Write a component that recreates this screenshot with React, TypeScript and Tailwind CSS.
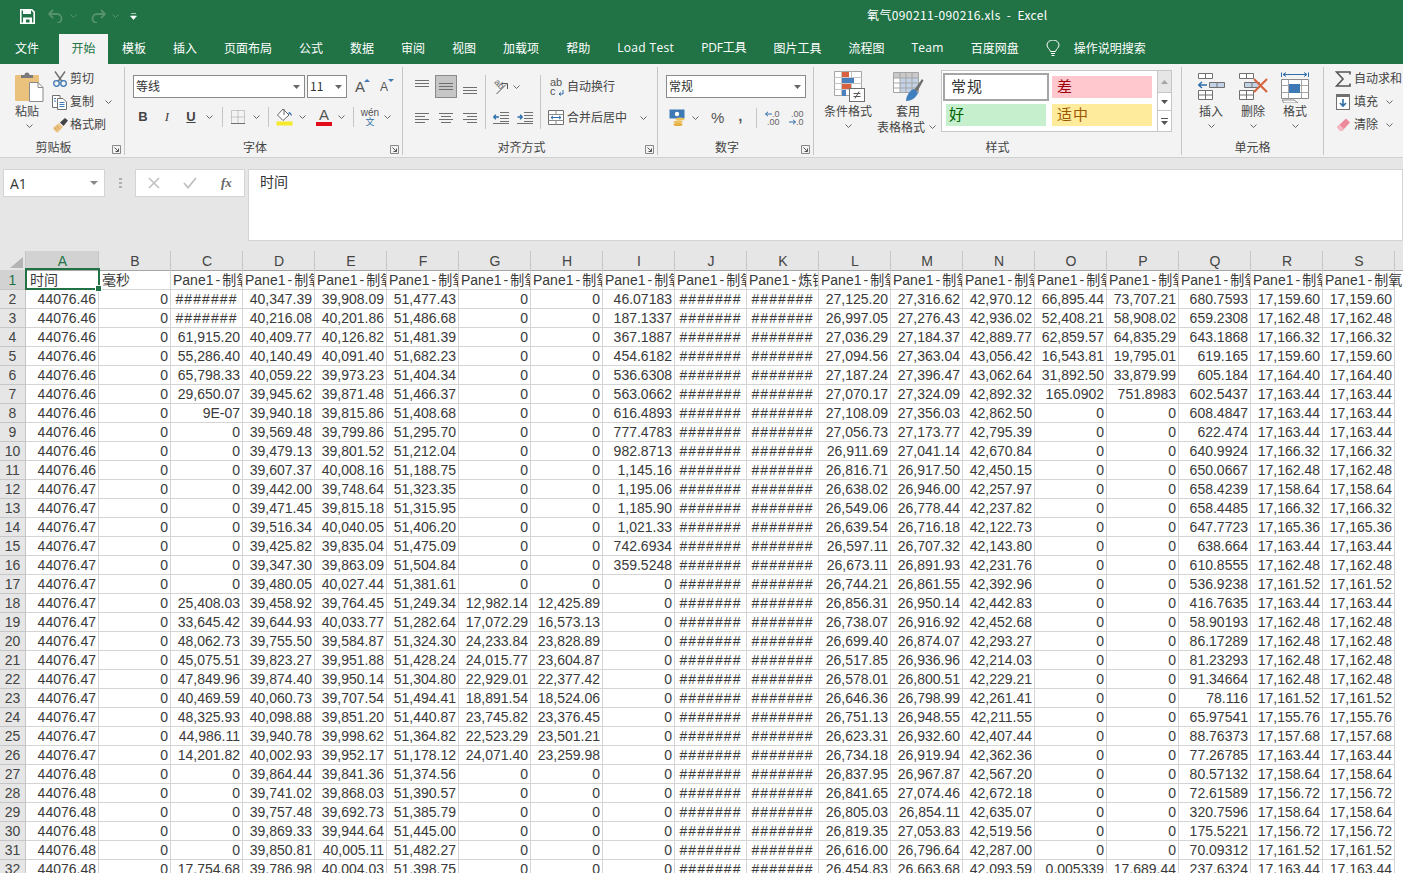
import React from "react";
import clsx from "clsx";

const H = "#";
const raw = `44076.46|0|#|40,347.39|39,908.09|51,477.43|0|0|46.07183|#|#|27,125.20|27,316.62|42,970.12|66,895.44|73,707.21|680.7593|17,159.60|17,159.60
44076.46|0|#|40,216.08|40,201.86|51,486.68|0|0|187.1337|#|#|26,997.05|27,276.43|42,936.02|52,408.21|58,908.02|659.2308|17,162.48|17,162.48
44076.46|0|61,915.20|40,409.77|40,126.82|51,481.39|0|0|367.1887|#|#|27,036.29|27,184.37|42,889.77|62,859.57|64,835.29|643.1868|17,166.32|17,166.32
44076.46|0|55,286.40|40,140.49|40,091.40|51,682.23|0|0|454.6182|#|#|27,094.56|27,363.04|43,056.42|16,543.81|19,795.01|619.165|17,159.60|17,159.60
44076.46|0|65,798.33|40,059.22|39,973.23|51,404.34|0|0|536.6308|#|#|27,187.24|27,396.47|43,062.64|31,892.50|33,879.99|605.184|17,164.40|17,164.40
44076.46|0|29,650.07|39,945.62|39,871.48|51,466.37|0|0|563.0662|#|#|27,070.17|27,324.09|42,892.32|165.0902|751.8983|602.5437|17,163.44|17,163.44
44076.46|0|9E-07|39,940.18|39,815.86|51,408.68|0|0|616.4893|#|#|27,108.09|27,356.03|42,862.50|0|0|608.4847|17,163.44|17,163.44
44076.46|0|0|39,569.48|39,799.86|51,295.70|0|0|777.4783|#|#|27,056.73|27,173.77|42,795.39|0|0|622.474|17,163.44|17,163.44
44076.46|0|0|39,479.13|39,801.52|51,212.04|0|0|982.8713|#|#|26,911.69|27,041.14|42,670.84|0|0|640.9924|17,166.32|17,166.32
44076.46|0|0|39,607.37|40,008.16|51,188.75|0|0|1,145.16|#|#|26,816.71|26,917.50|42,450.15|0|0|650.0667|17,162.48|17,162.48
44076.47|0|0|39,442.00|39,748.64|51,323.35|0|0|1,195.06|#|#|26,638.02|26,946.00|42,257.97|0|0|658.4239|17,158.64|17,158.64
44076.47|0|0|39,471.45|39,815.18|51,315.95|0|0|1,185.90|#|#|26,549.06|26,778.44|42,237.82|0|0|658.4485|17,166.32|17,166.32
44076.47|0|0|39,516.34|40,040.05|51,406.20|0|0|1,021.33|#|#|26,639.54|26,716.18|42,122.73|0|0|647.7723|17,165.36|17,165.36
44076.47|0|0|39,425.82|39,835.04|51,475.09|0|0|742.6934|#|#|26,597.11|26,707.32|42,143.80|0|0|638.664|17,163.44|17,163.44
44076.47|0|0|39,347.30|39,863.09|51,504.84|0|0|359.5248|#|#|26,673.11|26,891.93|42,231.76|0|0|610.8555|17,162.48|17,162.48
44076.47|0|0|39,480.05|40,027.44|51,381.61|0|0|0|#|#|26,744.21|26,861.55|42,392.96|0|0|536.9238|17,161.52|17,161.52
44076.47|0|25,408.03|39,458.92|39,764.45|51,249.34|12,982.14|12,425.89|0|#|#|26,856.31|26,950.14|42,442.83|0|0|416.7635|17,163.44|17,163.44
44076.47|0|33,645.42|39,644.93|40,033.77|51,282.64|17,072.29|16,573.13|0|#|#|26,738.07|26,916.92|42,452.68|0|0|58.90193|17,162.48|17,162.48
44076.47|0|48,062.73|39,755.50|39,584.87|51,324.30|24,233.84|23,828.89|0|#|#|26,699.40|26,874.07|42,293.27|0|0|86.17289|17,162.48|17,162.48
44076.47|0|45,075.51|39,823.27|39,951.88|51,428.24|24,015.77|23,604.87|0|#|#|26,517.85|26,936.96|42,214.03|0|0|81.23293|17,162.48|17,162.48
44076.47|0|47,849.96|39,874.40|39,950.14|51,304.80|22,929.01|22,377.42|0|#|#|26,578.01|26,800.51|42,229.21|0|0|91.34664|17,162.48|17,162.48
44076.47|0|40,469.59|40,060.73|39,707.54|51,494.41|18,891.54|18,524.06|0|#|#|26,646.36|26,798.99|42,261.41|0|0|78.116|17,161.52|17,161.52
44076.47|0|48,325.93|40,098.88|39,851.20|51,440.87|23,745.82|23,376.45|0|#|#|26,751.13|26,948.55|42,211.55|0|0|65.97541|17,155.76|17,155.76
44076.47|0|44,986.11|39,940.78|39,998.62|51,364.82|22,523.29|23,501.21|0|#|#|26,623.31|26,932.60|42,407.44|0|0|88.76373|17,157.68|17,157.68
44076.47|0|14,201.82|40,002.93|39,952.17|51,178.12|24,071.40|23,259.98|0|#|#|26,734.18|26,919.94|42,362.36|0|0|77.26785|17,163.44|17,163.44
44076.48|0|0|39,864.44|39,841.36|51,374.56|0|0|0|#|#|26,837.95|26,967.87|42,567.20|0|0|80.57132|17,158.64|17,158.64
44076.48|0|0|39,741.02|39,868.03|51,390.57|0|0|0|#|#|26,841.65|27,074.46|42,672.18|0|0|72.61589|17,156.72|17,156.72
44076.48|0|0|39,757.48|39,692.73|51,385.79|0|0|0|#|#|26,805.03|26,854.11|42,635.07|0|0|320.7596|17,158.64|17,158.64
44076.48|0|0|39,869.33|39,944.64|51,445.00|0|0|0|#|#|26,819.35|27,053.83|42,519.56|0|0|175.5221|17,156.72|17,156.72
44076.48|0|0|39,850.81|40,005.11|51,482.27|0|0|0|#|#|26,616.00|26,796.64|42,287.00|0|0|70.09312|17,161.52|17,161.52
44076.48|0|17,754.68|39,786.98|40,004.03|51,398.75|0|0|0|#|#|26,454.83|26,663.68|42,093.59|0.005339|17,689.44|237.6324|17,163.44|17,163.44`;

const rows = raw.split("\n").map((l) => l.split("|"));
const columns = "ABCDEFGHIJKLMNOPQRS".split("");
const tabs = ["模板", "插入", "页面布局", "公式", "数据", "审阅", "视图", "加载项", "帮助", "Load Test", "PDF工具", "图片工具", "流程图", "Team", "百度网盘"];
const gridCols = "grid grid-cols-[26px_73px_repeat(18,72px)_8px]";

function Chev({ color = "#666", className }: { color?: string; className?: string }) {
  return (
    <svg width="7" height="4" viewBox="0 0 7 4" className={clsx("shrink-0", className)}>
      <path d="M0.5 0.5 3.5 3.5 6.5 0.5" stroke={color} fill="none" />
    </svg>
  );
}

function Sep({ className }: { className?: string }) {
  return <div className={clsx("w-px bg-[#c6c6c6] shrink-0", className)} />;
}

function Group({ label, launcher, className, children }: { label?: string; launcher?: boolean; className: string; children: React.ReactNode }) {
  return (
    <div className={clsx("relative flex flex-col mt-[3px] h-[88px] shrink-0 border-r border-[#c6c6c6]", className)}>
      <div className="flex h-[70px]">{children}</div>
      <div className={clsx("h-[18px] leading-[20px] text-center text-[12px] text-[#444]", launcher && "pr-[17px]")}>{label}</div>
      {launcher && (
        <svg width="9" height="9" viewBox="0 0 9 9" className="absolute right-[3px] bottom-[1px]">
          <path d="M0.5 8.5V0.5H8.5V8.5Z" stroke="#888" fill="none" />
          <path d="M2.5 2.5 6.5 6.5M6.5 3.5V6.5H3.5" stroke="#555" fill="none" />
        </svg>
      )}
    </div>
  );
}

function Combo({ text, className }: { text: string; className: string }) {
  return (
    <div className={clsx("flex items-center h-[23px] bg-white border border-[#8a8a8a] shrink-0", className)}>
      <span className="flex-1 pl-[2px] pb-[2px] text-[12px] text-[#333] leading-none">{text}</span>
      <svg width="7" height="4" viewBox="0 0 7 4" className="mr-[4px]">
        <path d="M0 0H7L3.5 4Z" fill="#666" />
      </svg>
    </div>
  );
}

function Lines({ kind }: { kind: "left" | "center" | "right" }) {
  const short = kind === "left" ? "M1 5.5H11M1 11.5H11" : kind === "right" ? "M5 5.5H15M5 11.5H15" : "M3 5.5H13M3 11.5H13";
  return (
    <svg width="16" height="14" viewBox="0 0 16 14">
      <path d={`M1 2.5H15M1 8.5H15 ${short}`} stroke="#6f6f6f" fill="none" />
    </svg>
  );
}

function VLines({ n }: { n: number }) {
  return (
    <svg width="16" height="16" viewBox="0 0 16 16">
      <path d={n === 0 ? "M1 1.5H15M1 4.5H15M1 7.5H15" : n === 1 ? "M1 4.5H15M1 7.5H15M1 10.5H15" : "M1 8.5H15M1 11.5H15M1 14.5H15"} stroke="#6f6f6f" fill="none" />
    </svg>
  );
}

function PasteIcon() {
  return (
    <svg width="29" height="30" viewBox="0 0 29 30">
      <rect x="0" y="3" width="24" height="26" rx="1" fill="#ebc27d" />
      <path d="M6 5V3H9.5A2.5 2.5 0 0 1 14.5 3H18V6H6Z" fill="#7a7a7a" />
      <path d="M14.5 10.5H23L28 15.5V29.5H14.5Z" fill="#fff" stroke="#8a8a8a" />
      <path d="M23 10.5V15.5H28" fill="none" stroke="#8a8a8a" />
    </svg>
  );
}

function ScissorsIcon() {
  return (
    <svg width="16" height="16" viewBox="0 0 16 16">
      <path d="M3 0.5 10 10.5M13 0.5 6 10.5" stroke="#6f6f6f" strokeWidth="1.4" fill="none" />
      <circle cx="4.5" cy="12.5" r="2.8" stroke="#3f79b5" strokeWidth="1.3" fill="none" />
      <circle cx="11.5" cy="12.5" r="2.8" stroke="#3f79b5" strokeWidth="1.3" fill="none" />
    </svg>
  );
}

function CopyIcon() {
  return (
    <svg width="16" height="16" viewBox="0 0 16 16">
      <path d="M0.5 1.5H8V13.5H0.5Z" fill="#fff" stroke="#707070" />
      <path d="M5.5 4.5H11L14.5 8V15.5H5.5Z" fill="#fff" stroke="#707070" />
      <path d="M2 4.5H4M2 7H4M7.5 8.5H12.5M7.5 10.5H12.5M7.5 12.5H12.5" stroke="#3f79b5" />
    </svg>
  );
}

function BrushIcon() {
  return (
    <svg width="17" height="16" viewBox="0 0 17 16">
      <path d="M1 11 7 6 11 10 6 15.5C4 15.5 2 13.5 1 11Z" fill="#edc587" />
      <path d="M2.5 10.5 5 13M4.5 8.8 7.5 12" stroke="#c89a4e" fill="none" />
      <path d="M8 5.5 13 1 16 3.5 11.5 9Z" fill="#444" />
    </svg>
  );
}

function FillIcon() {
  return (
    <svg width="17" height="18" viewBox="0 0 17 18">
      <path d="M7 1 1.5 7 7 12.5 13 7Z" fill="#fff" stroke="#666" />
      <path d="M13.5 4C15.5 5 16 7 16 8L12 5Z" fill="#3f79b5" />
      <path d="M8 1V7" stroke="#666" />
      <rect x="0.5" y="13.5" width="16" height="4" fill="#f5ea2a" />
    </svg>
  );
}

function WrapIcon() {
  return (
    <div className="relative flex flex-col w-[14px] font-['Liberation_Sans'] text-[11px] leading-[9px] text-[#555]">
      <span>ab</span>
      <span>c</span>
      <svg width="6" height="7" viewBox="0 0 6 7" className="absolute right-0 bottom-0">
        <path d="M1 5H5V1M1 5 3 3.5M1 5 3 6.5" stroke="#2f6ea8" fill="none" />
      </svg>
    </div>
  );
}

function MergeIcon() {
  return (
    <svg width="16" height="15" viewBox="0 0 16 15">
      <path d="M0.5 0.5H15.5V14.5H0.5Z" fill="#fff" stroke="#707070" />
      <path d="M0.5 4.5H15.5M0.5 10.5H15.5M8 0.5V4.5M8 10.5V14.5" stroke="#8a8a8a" />
      <path d="M3 7.5H13M3 7.5 5 5.8M3 7.5 5 9.2M13 7.5 11 5.8M13 7.5 11 9.2" stroke="#2f6ea8" fill="none" />
    </svg>
  );
}

function OrientIcon() {
  return (
    <div className="relative w-[16px] h-[16px]">
      <span className="absolute left-[0px] top-[1px] font-['Liberation_Sans'] text-[9px] leading-[9px] text-[#666] rotate-45">ab</span>
      <svg width="16" height="16" viewBox="0 0 16 16">
        <path d="M2.5 15 12 5.5M8 4.5H13.5V10" stroke="#555" fill="none" />
      </svg>
    </div>
  );
}

function IndentIcon({ dir }: { dir: "out" | "in" }) {
  return (
    <svg width="16" height="12" viewBox="0 0 16 12">
      <path d="M7 0.5H16M7 3.5H16M7 6.5H16M7 9.5H16M0 11.5H16" stroke="#707070" fill="none" />
      {dir === "out" ? <path d="M0.5 5H6M0.5 5 3 2.8M0.5 5 3 7.2" stroke="#2f6ea8" strokeWidth="1.4" fill="none" /> : <path d="M0.5 5H5.5M5.5 5 3 2.8M5.5 5 3 7.2" stroke="#2f6ea8" strokeWidth="1.4" fill="none" />}
    </svg>
  );
}

function CurrencyIcon() {
  return (
    <svg width="17" height="17" viewBox="0 0 17 17">
      <rect x="0.5" y="0.5" width="15" height="9" fill="#3f79b5" />
      <circle cx="8" cy="5" r="2.2" fill="#fff" />
      <ellipse cx="11" cy="10" rx="4.5" ry="1.6" fill="#edc05f" />
      <ellipse cx="9" cy="13" rx="4.5" ry="1.6" fill="#edc05f" />
      <ellipse cx="9" cy="15.5" rx="4.5" ry="1.5" fill="#e3ae3d" />
    </svg>
  );
}

function DecIcon({ dir }: { dir: "more" | "less" }) {
  return (
    <div className="relative flex flex-col items-end w-[15px] font-['Liberation_Sans'] text-[9px] leading-[8px] text-[#666]">
      <span>{dir === "more" ? ".0" : ".00"}</span>
      <span>{dir === "more" ? ".00" : ".0"}</span>
      <svg width="7" height="6" viewBox="0 0 7 6" className={clsx("absolute left-0", dir === "more" ? "top-[1px]" : "bottom-[1px]")}>
        <path d={dir === "more" ? "M0.5 3H7M0.5 3 3 0.8M0.5 3 3 5.2" : "M0 3H6.5M6.5 3 4 0.8M6.5 3 4 5.2"} stroke="#2f6ea8" fill="none" />
      </svg>
    </div>
  );
}

function CondIcon() {
  return (
    <svg width="31" height="31" viewBox="0 0 31 31">
      <path d="M0.5 0.5H27.5V24.5H0.5Z" fill="#fff" stroke="#a5a5a5" />
      <path d="M7.5 0.5V24.5M17.5 0.5V24.5M0.5 6.5H27.5M0.5 12.5H27.5M0.5 18.5H27.5" stroke="#c6c6c6" />
      <rect x="8" y="1" width="7" height="5" fill="#d9613f" />
      <rect x="8" y="7" width="12" height="5" fill="#4a7fbd" />
      <rect x="8" y="13" width="9" height="5" fill="#d9613f" />
      <rect x="8" y="19" width="4" height="6" fill="#4a7fbd" />
      <rect x="15.5" y="17.5" width="15" height="13" fill="#fff" stroke="#707070" />
      <path d="M19.5 22.5H26.5M19.5 25.5H26.5M25 20.5 21 27.5" stroke="#555" fill="none" />
    </svg>
  );
}

function TableIcon() {
  return (
    <svg width="31" height="30" viewBox="0 0 31 30">
      <path d="M0.5 0.5H25.5V20.5H0.5Z" fill="#fff" stroke="#a5a5a5" />
      <rect x="1" y="1" width="24" height="5" fill="#c9c9c9" />
      <rect x="7" y="6" width="18" height="14" fill="#c3d2e6" />
      <path d="M7 0.5V20.5M13 0.5V20.5M19 0.5V20.5M0.5 6H25.5M0.5 11H25.5M0.5 16H25.5" stroke="#a5a5a5" />
      <path d="M21 18 29 7 30.5 8.5 24 20Z" fill="#707070" />
      <path d="M13 29C13 24 17 18 21 17L25 21C23 26 18 29 13 29Z" fill="#3f7fbe" />
    </svg>
  );
}

function InsertCellIcon() {
  return (
    <svg width="28" height="28" viewBox="0 0 28 28">
      <path d="M1.5 1.5H15.5V6.5H1.5ZM8.5 1.5V6.5" fill="#fff" stroke="#707070" />
      <path d="M12.5 10.5H27.5V15.5H12.5ZM20 10.5V15.5" fill="#c3d2e6" stroke="#707070" />
      <path d="M1.5 13H10M1.5 13 5 10M1.5 13 5 16" stroke="#2f6ea8" strokeWidth="1.5" fill="none" />
      <path d="M1.5 18.5H15.5V27.5H1.5ZM8.5 18.5V27.5M1.5 23H15.5" fill="#fff" stroke="#707070" />
    </svg>
  );
}

function DeleteCellIcon() {
  return (
    <svg width="31" height="28" viewBox="0 0 31 28">
      <path d="M1.5 1.5H15.5V6.5H1.5ZM8.5 1.5V6.5" fill="#fff" stroke="#707070" />
      <path d="M6.5 10.5H21.5V15.5H6.5ZM14 10.5V15.5" fill="#c3d2e6" stroke="#707070" />
      <path d="M1.5 18.5H15.5V27.5H1.5ZM8.5 18.5V27.5M1.5 23H15.5" fill="#fff" stroke="#707070" />
      <path d="M16 7 29 20M29 7 16 20" stroke="#d5663f" strokeWidth="2.2" fill="none" />
    </svg>
  );
}

function FormatCellIcon() {
  return (
    <svg width="28" height="31" viewBox="0 0 28 31">
      <path d="M0.5 0.5V5M27.5 0.5V5M2 2.5H26M2 2.5 5 0.5M2 2.5 5 4.5M26 2.5 23 0.5M26 2.5 23 4.5" stroke="#2f6ea8" fill="none" />
      <path d="M0.5 7.5H27.5V26.5H0.5Z" fill="#fff" stroke="#8a8a8a" />
      <path d="M7.5 7.5V26.5M20.5 7.5V26.5M0.5 13.5H27.5M0.5 20.5H27.5" stroke="#a5a5a5" />
      <rect x="8" y="12" width="11" height="9" fill="#3f79b5" />
      <path d="M1 28H13L17 31H3Z" fill="#fff" stroke="#8a8a8a" />
    </svg>
  );
}

function ClearIcon() {
  return (
    <svg width="15" height="15" viewBox="0 0 15 15">
      <path d="M1 10 10 1.5 14 5.5 6 14H4Z" fill="#ec8a9b" />
      <path d="M1 10 3.5 7.5 7.5 11.5 6 14H4Z" fill="#f4b9c4" />
    </svg>
  );
}

function FillDownIcon() {
  return (
    <svg width="14" height="16" viewBox="0 0 14 16">
      <rect x="0.5" y="0.5" width="13" height="15" fill="#fff" stroke="#707070" />
      <rect x="0" y="0" width="14" height="3" fill="#707070" />
      <path d="M7 5V12M4 9 7 12 10 9" stroke="#2f6ea8" strokeWidth="1.6" fill="none" />
    </svg>
  );
}

function TitleBar() {
  return (
    <div className="flex items-center h-[32px] bg-[#217346] text-white">
      <svg width="15" height="15" viewBox="0 0 15 15" className="ml-[20px]">
        <path d="M0.8 0.8H11.8L14.2 3.2V14.2H0.8Z" fill="none" stroke="#fff" strokeWidth="1.6" />
        <rect x="3" y="1" width="8" height="4" fill="#fff" />
        <path d="M3 14V8.5H12V14H9.5V10.5H6V14Z" fill="#fff" />
      </svg>
      <svg width="15" height="14" viewBox="0 0 15 14" className="ml-[13px]">
        <path d="M5 1 1 5 5 9M1 5H9A4.5 4.5 0 0 1 9 14" fill="none" stroke="#57926f" strokeWidth="1.8" />
      </svg>
      <Chev color="#57926f" className="ml-[7px]" />
      <svg width="15" height="14" viewBox="0 0 15 14" className="ml-[14px]">
        <path d="M10 1 14 5 10 9M14 5H6A4.5 4.5 0 0 0 6 14" fill="none" stroke="#57926f" strokeWidth="1.8" />
      </svg>
      <Chev color="#57926f" className="ml-[6px]" />
      <svg width="7" height="7" viewBox="0 0 7 7" className="ml-[11px]">
        <path d="M1 0.5H6M0.5 3H6.5L3.5 6.5Z" stroke="#fff" fill="#fff" strokeWidth="0.6" />
      </svg>
      <div className="ml-[730px] whitespace-pre text-[12px] tracking-[0.38px] mb-[3px]">氧气090211-090216.xls  -  Excel</div>
    </div>
  );
}

function TabBar() {
  return (
    <div className="flex items-end h-[32px] bg-[#217346] text-white text-[12px]">
      <div className="flex items-center h-[30px] w-[59px] pl-[15px] pb-[2px]">文件</div>
      <div className="flex items-center justify-center h-[30px] w-[49px] pb-[2px] bg-[#f3f3f3] text-[#217346]">开始</div>
      <div className="flex items-center h-[30px] pb-[2px] gap-x-[27px] ml-[14px]">
        {tabs.map((t) => (
          <span key={t} className={clsx(t === "Load Test" && "tracking-[0.35px] font-['Open_Sans',sans-serif]", t === "Team" && "tracking-[0.3px] font-['Open_Sans',sans-serif]", t === "PDF工具" && "tracking-[-0.2px] font-['Open_Sans','Noto_Sans_CJK_SC',sans-serif]")}>
            {t}
          </span>
        ))}
      </div>
      <div className="flex items-center h-[30px] pb-[2px] ml-[27px]">
        <svg width="14" height="17" viewBox="0 0 14 17">
          <path d="M4.5 11.5C4 9 1 8 1 5A6 5 0 0 1 13 5C13 8 10 9 9.5 11.5Z M5 13.5H9M5.5 15.5H8.5" fill="none" stroke="#fff" />
        </svg>
        <span className="ml-[14px]">操作说明搜索</span>
      </div>
    </div>
  );
}

function Ribbon() {
  return (
    <div className="flex h-[94px] bg-[#f3f3f3] border-b border-[#d0d0d0] text-[12px] text-[#444]">
      <Group label="剪贴板" launcher className="w-[125px]">
        <div className="flex flex-col items-center w-[29px] ml-[15px]">
          <div className="mt-[5px]"><PasteIcon /></div>
          <div className="self-start mt-[1px] leading-[16px]">粘贴</div>
          <Chev className="mt-[5px]" />
        </div>
        <div className="flex flex-col ml-[8px]">
          <div className="flex items-center h-[23px] gap-x-[2px]"><ScissorsIcon /><span className="pb-[2px]">剪切</span></div>
          <div className="flex items-center h-[23px] gap-x-[2px]"><CopyIcon /><span className="pb-[2px]">复制</span><Chev className="ml-[9px]" /></div>
          <div className="flex items-center h-[23px] gap-x-[1px]"><BrushIcon /><span className="pb-[2px]">格式刷</span></div>
        </div>
      </Group>

      <Group label="字体" launcher className="w-[278px]">
        <div className="flex flex-col pl-[8px] pt-[8px]">
          <div className="flex items-center gap-x-[2px]">
            <Combo text="等线" className="w-[172px]" />
            <Combo text="11" className="w-[40px]" />
            <div className="relative flex w-[14px] ml-[6px] font-['Liberation_Sans'] text-[15px] leading-[16px] text-[#555]">
              A
              <svg width="6" height="3" viewBox="0 0 6 3" className="absolute right-[-1px] top-[0px]"><path d="M0 3 3 0 6 3Z" fill="#3f79b5" /></svg>
            </div>
            <div className="relative flex w-[13px] ml-[9px] font-['Liberation_Sans'] text-[12px] leading-[16px] text-[#555]">
              A
              <svg width="6" height="3" viewBox="0 0 6 3" className="absolute right-[-1px] top-[0px]"><path d="M0 0H6L3 3Z" fill="#3f79b5" /></svg>
            </div>
          </div>
          <div className="flex items-center h-[20px] mt-[9px]">
            <span className="flex justify-center w-[20px] font-bold text-[13px] font-['Liberation_Sans'] text-[#444]">B</span>
            <span className="flex justify-center w-[28px] italic text-[13px] font-['Liberation_Serif'] text-[#444]">I</span>
            <span className="flex justify-center w-[20px] underline font-bold text-[13px] font-['Liberation_Sans'] text-[#444]">U</span>
            <Chev className="ml-[5px]" />
            <Sep className="h-[20px] ml-[9px]" />
            <svg width="14" height="14" viewBox="0 0 14 14" className="ml-[8px]">
              <path d="M0.5 0.5H13.5V13.5H0.5ZM7 0.5V13.5M0.5 7H13.5" fill="none" stroke="#9a9a9a" strokeDasharray="1 1" />
              <path d="M0 13.5H14" stroke="#707070" />
            </svg>
            <Chev className="ml-[8px]" />
            <Sep className="h-[20px] ml-[8px]" />
            <div className="ml-[7px]"><FillIcon /></div>
            <Chev className="ml-[6px]" />
            <div className="flex flex-col items-center w-[16px] ml-[10px] font-['Liberation_Sans'] text-[15px] leading-[14px] text-[#555]">
              A
              <div className="w-[16px] h-[4px] bg-[#e00c1a]" />
            </div>
            <Chev className="ml-[6px]" />
            <Sep className="h-[20px] ml-[8px]" />
            <div className="flex flex-col items-center w-[16px] ml-[8px] leading-[9px] text-[9px]">
              <span className="text-[#555] font-['Liberation_Sans'] text-[10px]">wén</span>
              <span className="text-[#2f6ea8]">文</span>
            </div>
            <Chev className="ml-[6px]" />
          </div>
        </div>
      </Group>

      <Group label="对齐方式" launcher className="w-[255px]">
        <div className="grid grid-cols-3 grid-rows-[23px_23px] gap-y-[8px] w-[72px] ml-[7px] pt-[8px] box-content">
          <div className="flex items-center justify-center"><VLines n={0} /></div>
          <div className="flex items-center justify-center mx-px bg-[#c6c6c6] border border-[#8a8a8a]"><VLines n={1} /></div>
          <div className="flex items-center justify-center"><VLines n={2} /></div>
          <div className="flex items-center justify-center"><Lines kind="left" /></div>
          <div className="flex items-center justify-center"><Lines kind="center" /></div>
          <div className="flex items-center justify-center"><Lines kind="right" /></div>
        </div>
        <Sep className="h-[54px] mt-[8px] ml-[3px]" />
        <div className="flex flex-col w-[54px] pt-[8px]">
          <div className="flex items-center h-[23px] pl-[8px] gap-x-[3px]"><OrientIcon /><Chev /></div>
          <div className="flex items-center h-[23px] mt-[8px] pl-[7px] gap-x-[8px]"><IndentIcon dir="out" /><IndentIcon dir="in" /></div>
        </div>
        <Sep className="h-[54px] mt-[8px]" />
        <div className="flex flex-col pt-[8px]">
          <div className="flex items-center h-[23px] pl-[9px] gap-x-[3px]"><WrapIcon /><span className="pb-[2px]">自动换行</span></div>
          <div className="flex items-center h-[23px] mt-[8px] pl-[7px] gap-x-[3px]"><MergeIcon /><span className="pb-[2px]">合并后居中</span><Chev className="ml-[10px]" /></div>
        </div>
      </Group>

      <Group label="数字" launcher className="w-[156px]">
        <div className="flex flex-col pl-[8px] pt-[8px]">
          <Combo text="常规" className="w-[140px]" />
          <div className="flex items-center h-[23px] mt-[8px]">
            <div className="ml-[3px]"><CurrencyIcon /></div>
            <Chev className="ml-[6px]" />
            <span className="ml-[12px] text-[15px] font-['Liberation_Sans'] text-[#555] leading-none">%</span>
            <span className="ml-[14px] text-[15px] font-bold font-['Liberation_Sans'] text-[#555] leading-none mb-[5px]">,</span>
            <Sep className="h-[20px] ml-[13px]" />
            <div className="ml-[8px]"><DecIcon dir="more" /></div>
            <div className="ml-[9px]"><DecIcon dir="less" /></div>
          </div>
        </div>
      </Group>

      <Group label="样式" className="w-[368px]">
        <div className="flex flex-col items-center w-[48px] ml-[10px]">
          <div className="mt-[4px] h-[32px] ml-[3px]"><CondIcon /></div>
          <div className="leading-[16px]">条件格式</div>
          <Chev className="mt-[5px]" />
        </div>
        <div className="flex flex-col w-[60px] ml-[5px]">
          <div className="mt-[5px] h-[31px] ml-[16px]"><TableIcon /></div>
          <div className="leading-[16px] pl-[19px]">套用</div>
          <div className="flex items-center leading-[16px]">表格格式<Chev className="ml-[4px]" /></div>
        </div>
        <div className="flex w-[231px] h-[62px] mt-[3px] ml-[4px] bg-white border border-[#c6c6c6]">
          <div className="grid grid-cols-[106px_100px] grid-rows-[28px_22px] gap-x-[3px] gap-y-[3px] pl-[1px] pt-[2px] text-[15px] w-[214px]">
            <div className="flex items-center pl-[6px] pb-[2px] bg-white border-2 border-[#a5a5a5] tracking-[1px] text-[#333]">常规</div>
            <div className="flex items-center pl-[5px] pb-[2px] h-[22px] self-center bg-[#ffc7ce] text-[#9c0006]">差</div>
            <div className="flex items-center pl-[3px] pb-[2px] ml-[3px] w-[100px] bg-[#c6efce] text-[#006100]">好</div>
            <div className="flex items-center pl-[5px] pb-[2px] bg-[#ffeb9c] text-[#9c5700] tracking-[1px]">适中</div>
          </div>
          <div className="flex flex-col w-[14px] ml-[1px] border-l border-[#c6c6c6]">
            <div className="flex items-center justify-center h-[21px] bg-[#e6e6e6]">
              <svg width="7" height="4" viewBox="0 0 7 4"><path d="M0 4H7L3.5 0Z" fill="#a5a5a5" /></svg>
            </div>
            <div className="flex items-center justify-center h-[19px] border-y border-[#c6c6c6]">
              <svg width="7" height="4" viewBox="0 0 7 4"><path d="M0 0H7L3.5 4Z" fill="#555" /></svg>
            </div>
            <div className="flex flex-col items-center justify-center flex-1 gap-y-[2px]">
              <div className="w-[7px] h-px bg-[#555]" />
              <svg width="7" height="4" viewBox="0 0 7 4"><path d="M0 0H7L3.5 4Z" fill="#555" /></svg>
            </div>
          </div>
        </div>
      </Group>

      <Group label="单元格" className="w-[142px]">
        <div className="flex pl-[8px]">
          <div className="flex flex-col items-center w-[42px]">
            <div className="mt-[5px] h-[31px]"><InsertCellIcon /></div>
            <div className="leading-[16px]">插入</div>
            <Chev className="mt-[5px]" />
          </div>
          <div className="flex flex-col items-center w-[42px]">
            <div className="mt-[5px] h-[31px]"><DeleteCellIcon /></div>
            <div className="leading-[16px]">删除</div>
            <Chev className="mt-[5px]" />
          </div>
          <div className="flex flex-col items-center w-[42px]">
            <div className="mt-[5px] h-[31px]"><FormatCellIcon /></div>
            <div className="leading-[16px]">格式</div>
            <Chev className="mt-[5px]" />
          </div>
        </div>
      </Group>

      <div className="flex flex-col mt-[3px] pl-[11px] whitespace-nowrap">
        <div className="flex items-center h-[23px] gap-x-[3px]">
          <svg width="16" height="16" viewBox="0 0 16 16"><path d="M15 3.5V1H1.5L8 8 1.5 15H15V12.5" fill="none" stroke="#555" strokeWidth="1.6" /></svg>
          <span className="pb-[2px]">自动求和</span>
        </div>
        <div className="flex items-center h-[23px] gap-x-[4px]">
          <div className="ml-px"><FillDownIcon /></div>
          <span className="pb-[2px]">填充</span>
          <Chev className="ml-[4px]" />
        </div>
        <div className="flex items-center h-[23px] gap-x-[3px]">
          <div className="ml-px"><ClearIcon /></div>
          <span className="pb-[2px]">清除</span>
          <Chev className="ml-[5px]" />
        </div>
      </div>
    </div>
  );
}

function FormulaBar() {
  return (
    <div className="flex items-start h-[93px] pt-[11px] bg-[#e6e6e6]">
      <div className="flex items-center justify-between w-[102px] h-[28px] ml-[3px] px-[6px] bg-white border border-[#d4d4d4] text-[14px] text-[#333] font-['Open_Sans',sans-serif]">
        <span>A1</span>
        <svg width="8" height="4" viewBox="0 0 8 4"><path d="M0 0H8L4 4Z" fill="#888" /></svg>
      </div>
      <div className="flex justify-center items-center w-[30px] h-[28px]">
        <svg width="3" height="10" viewBox="0 0 3 10"><path d="M0 0H3V2H0ZM0 4H3V6H0ZM0 8H3V10H0Z" fill="#b0b0b0" /></svg>
      </div>
      <div className="flex items-center w-[110px] h-[28px] bg-white border border-[#d4d4d4]">
        <svg width="12" height="12" viewBox="0 0 12 12" className="ml-[12px]"><path d="M1 1 11 11M11 1 1 11" stroke="#c0c0c0" strokeWidth="1.6" /></svg>
        <svg width="14" height="12" viewBox="0 0 14 12" className="ml-[23px]"><path d="M1 6 5 10.5 13 1" stroke="#c0c0c0" strokeWidth="1.8" fill="none" /></svg>
        <span className="ml-[24px] italic font-bold text-[13px] text-[#666] font-['Liberation_Serif']">fx</span>
      </div>
      <div className="flex-1 h-[72px] ml-[3px] pl-[11px] pt-[1px] bg-white border border-[#d4d4d4] text-[14px] leading-[20px] text-[#333]">时间</div>
    </div>
  );
}

function Sheet() {
  return (
    <div className="text-[14px] text-[#3a3a3a] font-['Liberation_Sans','Noto_Sans_CJK_SC',sans-serif] leading-none">
      <div className={clsx(gridCols, "h-[19px] bg-[#e6e6e6] border-b border-[#a5a5a5] box-content -mb-px")}>
        <div className="relative border-r border-[#c6c6c6]">
          <svg width="13" height="11" viewBox="0 0 13 11" className="absolute right-[2px] bottom-[2px]"><path d="M13 0V11H0Z" fill="#b4b4b4" /></svg>
        </div>
        {columns.map((c) => (
          <div key={c} className={clsx("flex items-center justify-center pl-px border-r border-[#c6c6c6]", c === "A" ? "bg-[#d2d2d2] text-[#217346]" : "text-[#444]")}>
            {c}
          </div>
        ))}
        <div />
      </div>
      <div className={clsx(gridCols, "h-[20px]")}>
        <div className="flex items-center justify-center bg-[#d2d2d2] text-[#217346] border-r border-b border-[#c6c6c6]">1</div>
        <div className="relative flex items-center pl-[4px] border-r border-b border-[#d4d4d4]">
          时间
          <div className="absolute left-[-1px] right-[-2px] top-[-2px] bottom-[-1px] border-2 border-[#217346]" />
          <div className="absolute right-[-4px] bottom-[-3px] w-[5px] h-[5px] bg-[#217346] border border-white box-content" />
        </div>
        <div className="flex items-center pl-[3px] border-r border-b border-[#d4d4d4]">毫秒</div>
        {columns.slice(2).map((c) => (
          <div key={c} className={clsx("flex items-center pl-[2px] border-r border-b border-[#d4d4d4] whitespace-nowrap", c === "S" ? "overflow-visible" : "overflow-hidden")}>
            Pane1<span className="mx-[2px]">-</span>{c === "K" ? "炼钢" : "制氧"}
          </div>
        ))}
        <div />
      </div>
      {rows.map((row, i) => (
        <div key={i} className={clsx(gridCols, "h-[19px]")}>
          <div className="flex items-center justify-center bg-[#e6e6e6] text-[#444] border-r border-b border-[#c6c6c6]">{i + 2}</div>
          {row.map((v, j) => (
            <div key={j} className={clsx("flex items-center border-r border-b border-[#d4d4d4] whitespace-nowrap", v === H ? "justify-center tracking-[1.1px]" : "justify-end pr-[2px]")}>
              {v === H ? "#######" : v}
            </div>
          ))}
          <div />
        </div>
      ))}
    </div>
  );
}

export default function App() {
  return (
    <div className="w-[1403px] h-[873px] overflow-hidden bg-white font-['Noto_Sans_CJK_SC','Noto_Sans',sans-serif]">
      <TitleBar />
      <TabBar />
      <Ribbon />
      <FormulaBar />
      <Sheet />
    </div>
  );
}
